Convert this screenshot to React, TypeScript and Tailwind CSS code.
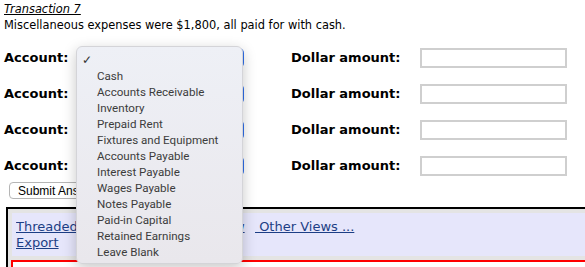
import React from "react";

const items = [
  "Cash",
  "Accounts Receivable",
  "Inventory",
  "Prepaid Rent",
  "Fixtures and Equipment",
  "Accounts Payable",
  "Interest Payable",
  "Wages Payable",
  "Notes Payable",
  "Paid-in Capital",
  "Retained Earnings",
  "Leave Blank",
];

function Row() {
  return (
    <div className="flex items-center h-[20px]">
      <div className="w-[78px] pl-[4px] font-bold text-[13px] text-black">Account:</div>
      <div className="w-[166px] h-[20px] rounded-[5px] bg-[#2f6fea]" />
      <div className="w-[47px]" />
      <div className="w-[129px] font-bold text-[13px] text-black">Dollar amount:</div>
      <div className="w-[147px] h-[20px] border-2 border-[#cfcfcf] bg-white" />
    </div>
  );
}

export default function App() {
  return (
    <div className="relative w-[585px] h-[267px] overflow-hidden bg-white text-[13px] leading-[16px] text-black" style={{ fontFamily: '"DejaVu Sans", Verdana, sans-serif' }}>
      <div className="pl-[4px] pt-[1px] text-[11.4px]">
        <div className="italic underline">Transaction 7</div>
        <div>Miscellaneous expenses were $1,800, all paid for with cash.</div>
      </div>
      <div className="mt-[15px] flex flex-col gap-[16px]">
        <Row />
        <Row />
        <Row />
        <Row />
      </div>
      <div className="mt-[6px] pl-[9px]">
        <div className="inline-flex items-center h-[17px] w-[130px] px-[8px] rounded-[4px] border border-[#b5b5b5] bg-white text-[12px]" style={{ fontFamily: '"Liberation Sans", Arial, sans-serif' }}>
          Submit Answer
        </div>
      </div>
      <div className="mt-[8px] ml-[6px] w-[600px] border-l-2 border-t-2 border-black bg-[#e4e4e4] pt-[4px] pl-[4px]">
        <div className="bg-[#e6e6fb] h-[43px] pl-[4px] pt-[6px] text-[#1c3e85]">
          <div className="flex">
            <span className="underline w-[239px] whitespace-nowrap overflow-hidden">Threaded View&nbsp;&nbsp;Chronological View</span>
            <span className="underline whitespace-pre"> Other Views ...</span>
          </div>
          <div className="underline">Export</div>
        </div>
        <div className="h-[4px]" />
        <div className="ml-[-1px] border-t-2 border-l-2 border-[#ff0000] h-[10px] bg-white" />
      </div>

      <div
        className="absolute left-[76px] top-[46px] w-[167px] h-[218px] rounded-[6px] border border-[#d4d4d8] shadow-[0_4px_14px_rgba(0,0,0,0.22)] bg-gradient-to-b from-[#eef0f6] to-[#e9e7ec] pt-[5px]"
        style={{ fontFamily: 'Roboto, "Noto Sans", sans-serif' }}
      >
        <div className="h-[16px] pl-[5px] flex items-center text-[12px] text-[#333]">✓</div>
        {items.map((it) => (
          <div key={it} className="h-[16px] pl-[20px] flex items-center text-[11.6px] text-[#3c3c3c]">
            {it}
          </div>
        ))}
      </div>
    </div>
  );
}
